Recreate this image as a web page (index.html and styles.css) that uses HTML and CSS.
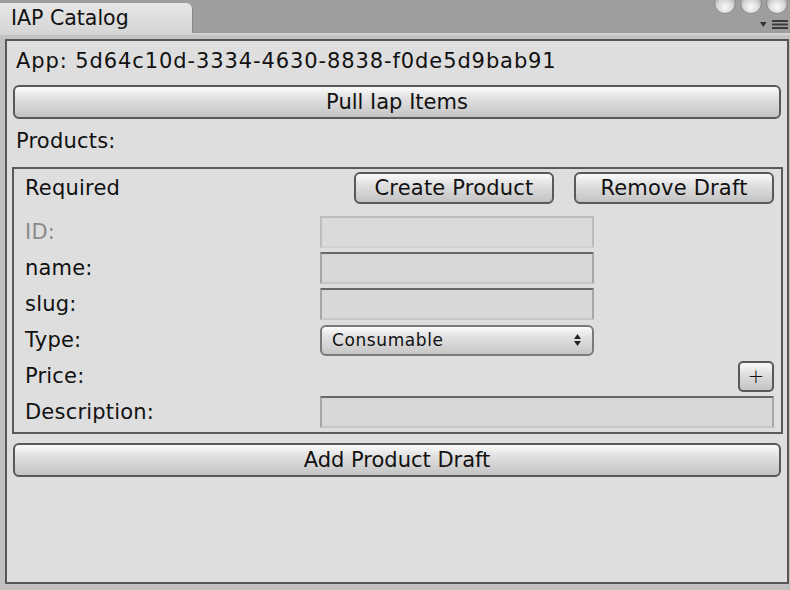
FILE: index.html
```html
<!DOCTYPE html>
<html>
<head>
<meta charset="utf-8">
<link rel="stylesheet" href="styles.css">
</head>
<body>
<div class="tabbar">
  <div class="tab">IAP Catalog</div>
  <svg class="winctrls" width="78" height="33" viewBox="0 0 78 33">
    <defs>
      <radialGradient id="ball" cx="50%" cy="70%" r="60%">
        <stop offset="0" stop-color="#fafafa"/>
        <stop offset="0.6" stop-color="#d8d8d8"/>
        <stop offset="1" stop-color="#a8a8a8"/>
      </radialGradient>
    </defs>
    <circle cx="13" cy="3" r="10.5" fill="url(#ball)" stroke="#8c8c8c" stroke-width="1"/>
    <circle cx="39" cy="3" r="10.5" fill="url(#ball)" stroke="#8c8c8c" stroke-width="1"/>
    <circle cx="65" cy="3" r="10.5" fill="url(#ball)" stroke="#8c8c8c" stroke-width="1"/>
    <polygon points="48,22 54.5,22 51.25,27" fill="#333"/>
    <rect x="60" y="20" width="16" height="2" fill="#3a3a3a"/>
    <rect x="60" y="23.5" width="16" height="2" fill="#3a3a3a"/>
    <rect x="60" y="27" width="16" height="2" fill="#3a3a3a"/>
  </svg>
</div>
<div class="tabline"></div>
<div class="window">
  <div class="app">App: 5d64c10d-3334-4630-8838-f0de5d9bab91</div>
  <div class="btn btn-wide">Pull Iap Items</div>
  <div class="products">Products:</div>
  <div class="box">
    <div class="box-head">
      <span class="label">Required</span>
      <div class="head-btns">
        <div class="btn btn-small">Create Product</div>
        <div class="btn btn-small">Remove Draft</div>
      </div>
    </div>
    <div class="form">
      <span class="label disabled">ID:</span>
      <div class="field field-disabled"></div>
      <span class="label">name:</span>
      <div class="field"></div>
      <span class="label">slug:</span>
      <div class="field"></div>
      <span class="label">Type:</span>
      <div class="popup"><span>Consumable</span>
        <svg class="arrows" width="7" height="12" viewBox="0 0 7 12"><polygon points="3.5,0 7,5 0,5" fill="#222"/><polygon points="0,7 7,7 3.5,12" fill="#222"/></svg>
      </div>
      <span class="label">Price:</span>
      <div class="plus-cell"><div class="btn btn-plus">+</div></div>
      <span class="label">Description:</span>
      <div class="field field-wide"></div>
    </div>
  </div>
  <div class="btn btn-wide btn-add">Add Product Draft</div>
</div>
</body>
</html>
```

FILE: styles.css
```css
html, body {
  margin: 0;
  padding: 0;
}
body {
  width: 790px;
  height: 590px;
  overflow: hidden;
  background: #c0c0c0;
  font-family: "DejaVu Sans", "Liberation Sans", sans-serif;
  color: #111;
}
.tabbar {
  height: 33px;
  background: #9e9e9e;
  display: flex;
}
.tab {
  width: 193px;
  margin-top: 3px;
  box-sizing: border-box;
  background: linear-gradient(#e6e6e6, #d6d6d6);
  border-top-right-radius: 6px;
  border-right: 1px solid #878787;
  font-size: 20.5px;
  line-height: 30px;
  padding-left: 11px;
}
.winctrls {
  margin-left: auto;
  display: block;
}
.tabline {
  height: 6px;
  box-sizing: border-box;
  background: #c3c3c3;
  border-top: 2px solid #d3d3d3;
}
.window {
  margin: 0 1px 0 5px;
  height: 545px;
  box-sizing: border-box;
  border: 2px solid #575757;
  background: #dedede;
  padding-top: 2px;
}
.app, .products {
  height: 36px;
  line-height: 37px;
  padding-left: 9px;
  font-size: 21px;
  white-space: nowrap;
}
.app {
  letter-spacing: 0.9px;
}
.products {
  margin-top: 4px;
  letter-spacing: 0.2px;
}
.btn {
  box-sizing: border-box;
  border: 2px solid #595959;
  border-radius: 6px;
  background: linear-gradient(#fbfbfb, #e2e2e2 35%, #c3c3c3);
  display: flex;
  align-items: center;
  justify-content: center;
  font-size: 21px;
  color: #111;
}
.btn-wide {
  height: 34px;
  margin: 6px 6px 0 6px;
}
.btn-add {
  margin-top: 9px;
}
.box {
  margin: 8px 4px 0 5px;
  border: 2px solid #5a5a5a;
  padding: 3px 7px 4px 11px;
}
.box-head {
  height: 32px;
  display: flex;
  align-items: center;
  justify-content: space-between;
}
.head-btns {
  display: flex;
  gap: 20px;
}
.btn-small {
  width: 200px;
  height: 32px;
  letter-spacing: 0.2px;
}
.label {
  font-size: 21px;
  letter-spacing: 0.2px;
  line-height: 32px;
  white-space: nowrap;
}
.label.disabled {
  color: #8a8a8a;
}
.form {
  margin-top: 12px;
  display: grid;
  grid-template-columns: 295px 1fr;
  grid-auto-rows: 32px;
  row-gap: 4px;
  align-items: center;
}
.field {
  width: 274px;
  height: 32px;
  box-sizing: border-box;
  background: #d8d8d8;
  border: 2px solid #a6a6a6;
  border-top-color: #676767;
  border-bottom-color: #c6c6c6;
}
.field-disabled {
  background: #dadada;
  border-color: #bdbdbd;
  border-bottom-color: #d0d0d0;
}
.field-wide {
  width: 100%;
}
.popup {
  width: 274px;
  height: 31px;
  box-sizing: border-box;
  border: 2px solid #7a7a7a;
  border-radius: 6px;
  background: linear-gradient(#fbfbfb, #e2e2e2 35%, #c6c6c6);
  display: flex;
  align-items: center;
  justify-content: space-between;
  padding: 0 11px 0 10px;
  font-size: 17px;
  letter-spacing: 0.6px;
}
.arrows {
  display: block;
}
.plus-cell {
  display: flex;
  justify-content: flex-end;
}
.btn-plus {
  width: 36px;
  height: 31px;
  border-radius: 5px;
  font-size: 20px;
  font-weight: 300;
}
```
